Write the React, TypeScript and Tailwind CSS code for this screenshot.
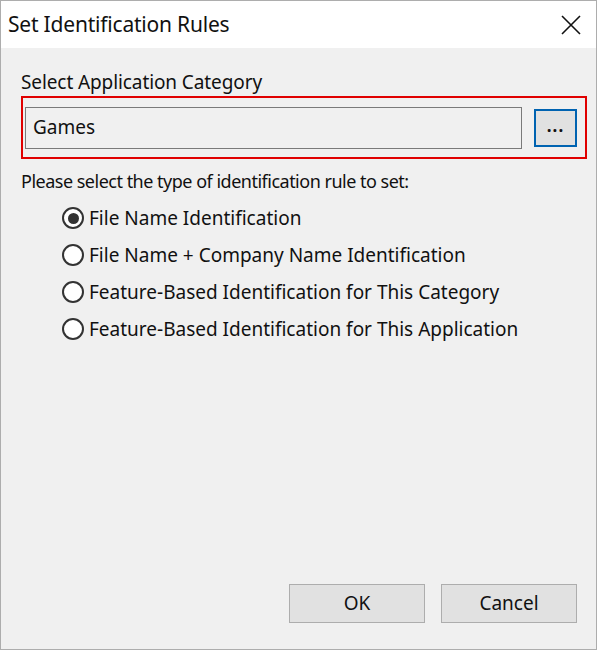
const options = [
  'File Name Identification',
  'File Name + Company Name Identification',
  'Feature-Based Identification for This Category',
  'Feature-Based Identification for This Application',
];

const Radio = ({ checked }: { checked: boolean }) => (
  <span className="flex h-[22px] w-[22px] shrink-0 items-center justify-center rounded-full border-2 border-[#333] bg-white">
    {checked && <span className="h-[11px] w-[11px] rounded-full bg-[#333]" />}
  </span>
);

export default function App() {
  return (
    <div className="flex h-[650px] w-[597px] flex-col border border-[#adadad] bg-[#f0f0f0] font-['Noto_Sans',sans-serif] text-[#111]">
      <div className="flex h-[47px] shrink-0 items-center justify-between bg-white pl-[7px] pr-[14px]">
        <span className="text-[21px] tracking-[-0.2px]">Set Identification Rules</span>
        <svg width="22" height="22" viewBox="0 0 22 22" className="text-[#111]">
          <path d="M2 2 L20 20 M20 2 L2 20" stroke="currentColor" strokeWidth="1.6" />
        </svg>
      </div>
      <div className="flex flex-1 flex-col pl-[20px] pr-[9px] pt-[22px]">
        <div className="text-[19px] leading-[24px] tracking-[-0.1px]">Select Application Category</div>
        <div className="mt-[2px] flex h-[63px] items-center gap-[12px] border-2 border-[#e00000] pl-[2px] pr-[8px]">
          <div className="flex h-[42px] flex-1 items-center border border-[#7a7a7a] pl-[7px] text-[19px]">Games</div>
          <div className="flex h-[38px] w-[43px] items-center justify-center border-2 border-[#0063b1] bg-[#e1e1e1] pb-[4px] text-[17px] font-bold tracking-[1px]">
            ...
          </div>
        </div>
        <div className="mt-[10px] text-[18px] leading-[24px] tracking-[-0.5px]">Please select the type of identification rule to set:</div>
        <div className="mt-[13px] flex flex-col gap-[13px] pl-[41px]">
          {options.map((o, i) => (
            <div key={o} className="flex h-[24px] items-center gap-[5px] text-[19px]">
              <Radio checked={i === 0} />
              <span>{o}</span>
            </div>
          ))}
        </div>
        <div className="mt-auto mb-[26px] flex justify-end gap-[16px] pr-[10px]">
          <button className="h-[39px] w-[136px] border border-[#adadad] bg-[#e1e1e1] text-[19px]">OK</button>
          <button className="h-[39px] w-[136px] border border-[#adadad] bg-[#e1e1e1] text-[19px]">Cancel</button>
        </div>
      </div>
    </div>
  );
}
